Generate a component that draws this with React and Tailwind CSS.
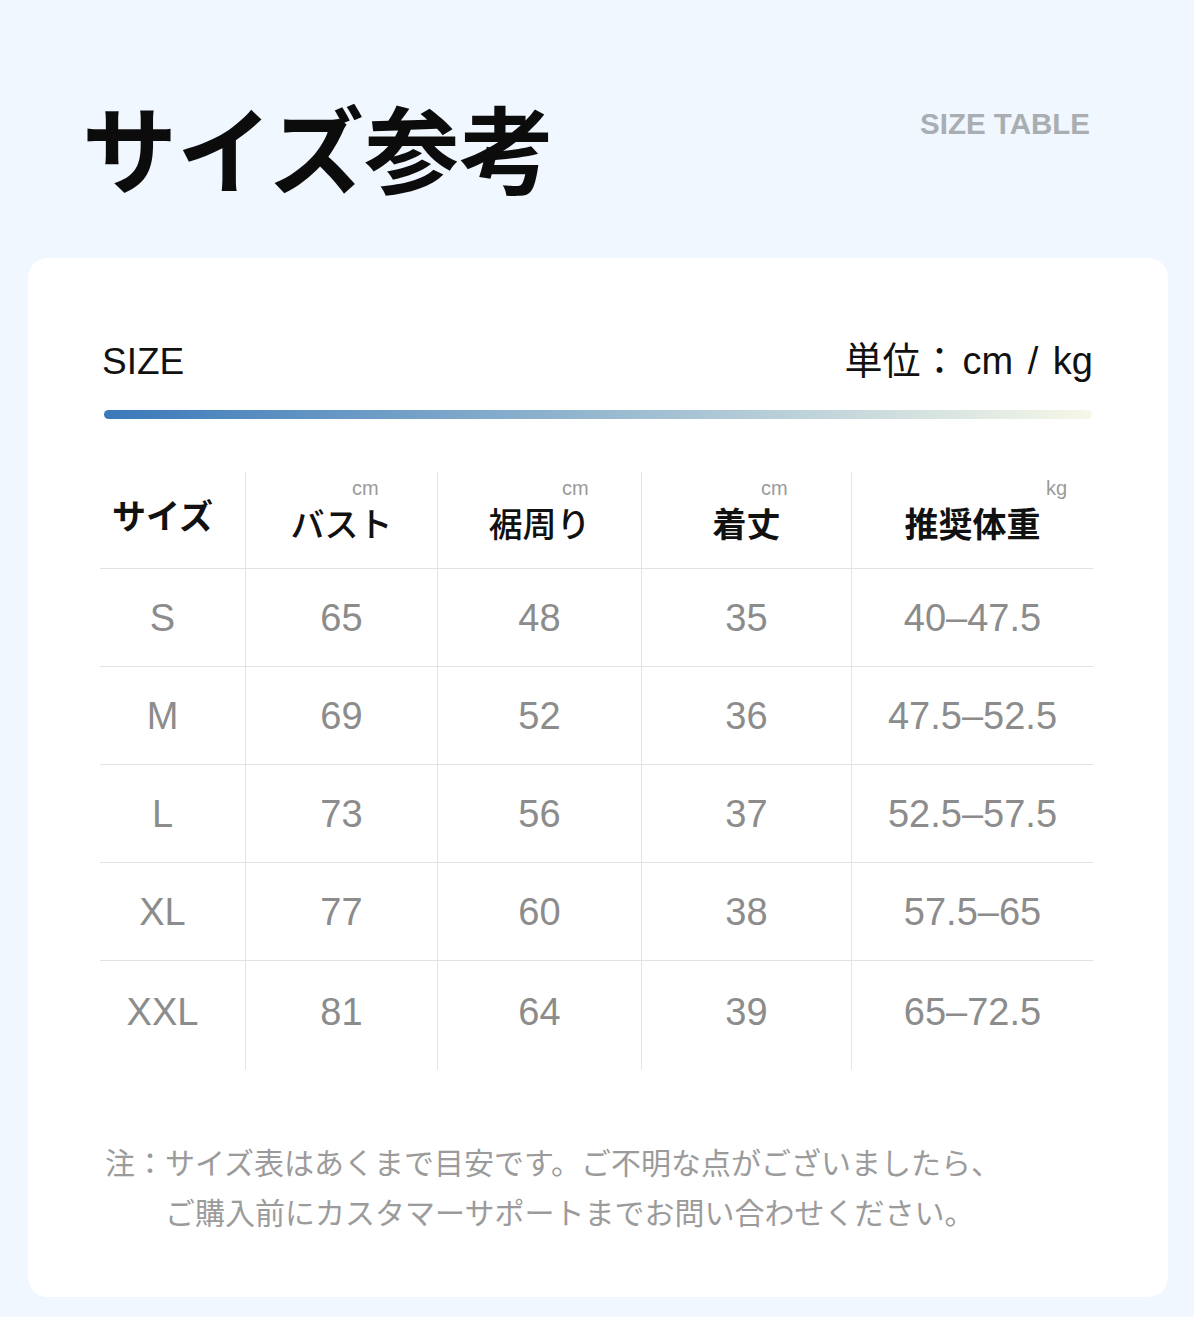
import React from "react";

const cjk = "font-['Noto_Sans_CJK_JP',sans-serif]";
const latin = "font-['Liberation_Sans','Noto_Sans_CJK_JP',sans-serif]";

const columns = [
  { label: "サイズ", width: "w-[146px]", unit: null, weight: "font-bold", first: true },
  { label: "バスト", width: "w-[192px]", unit: "cm", unitPos: "left-[106px]", weight: "font-medium" },
  { label: "裾周り", width: "w-[204px]", unit: "cm", unitPos: "left-[124px]", weight: "font-medium" },
  { label: "着丈", width: "w-[210px]", unit: "cm", unitPos: "left-[119px]", weight: "font-bold" },
  { label: "推奨体重", width: "flex-1", unit: "kg", unitPos: "left-[194px]", weight: "font-bold" },
];

const rows = [
  ["S", "65", "48", "35", "40–47.5"],
  ["M", "69", "52", "36", "47.5–52.5"],
  ["L", "73", "56", "37", "52.5–57.5"],
  ["XL", "77", "60", "38", "57.5–65"],
  ["XXL", "81", "64", "39", "65–72.5"],
];

const HeaderCell = ({ col, last }) => (
  <div
    className={`relative ${col.width} flex items-center justify-center ${
      col.first ? "pr-[20px] pb-[10px]" : "pt-[6px]"
    } ${last ? "" : "border-r border-[#e4e4e4]"}`}
  >
    {col.unit && (
      <span
        className={`absolute top-[6px] ${col.unitPos} text-[20px] leading-none text-[#9a9a9a] ${latin}`}
      >
        {col.unit}
      </span>
    )}
    <span className={`text-[34px] leading-none text-[#111] ${col.weight} ${cjk}`}>
      {col.label}
    </span>
  </div>
);

const App = () => {
  return (
    <div className="min-h-[1317px] bg-[#f0f7fe] pb-[21px]">
      <div className="flex items-start justify-between pl-[82px] pr-[104px] pt-[98px]">
        <h1 className={`text-[95px] leading-none font-bold text-[#0c0c0c] ${cjk}`}>
          サイズ参考
        </h1>
        <span
          className={`mt-[11px] text-[29.5px] leading-[30px] font-bold text-[#a9aeb3] ${latin}`}
        >
          SIZE TABLE
        </span>
      </div>

      <div className="mt-[65px] ml-[28px] mr-[26px] rounded-[20px] bg-white pl-[72px] pr-[75px] pt-[81px] pb-[61px]">
        <div className="flex h-[37px] items-baseline justify-between pl-[2px]">
          <span className={`text-[37px] leading-[37px] text-[#111] ${latin}`}>SIZE</span>
          <span className="flex h-[37px] items-baseline text-[#111]">
            <span className={`text-[38px] leading-[37px] ${cjk}`}>単位：</span>
            <span className={`ml-[4px] text-[38px] leading-[37px] [word-spacing:4px] ${latin}`}>cm / kg</span>
          </span>
        </div>

        <div className="mt-[34px] ml-[4px] mr-[1px] h-[9px] rounded-full bg-linear-to-r from-[#3a79ba] via-[#96b8cf] to-[#f6f8e8]" />

        <div className="mt-[53px]">
          <div className="flex h-[97px] border-b border-[#e2e2e2]">
            {columns.map((col, i) => (
              <HeaderCell key={col.label} col={col} last={i === columns.length - 1} />
            ))}
          </div>
          {rows.map((row, r) => {
            const isLast = r === rows.length - 1;
            return (
              <div
                key={row[0]}
                className={`flex ${isLast ? "h-[109px]" : "h-[98px] border-b border-[#e2e2e2]"}`}
              >
                {row.map((cell, i) => (
                  <div
                    key={i}
                    className={`${columns[i].width} flex items-center justify-center ${
                      i === 0 ? "pr-[20px]" : ""
                    } ${isLast ? "pb-[8px]" : ""} ${
                      i === row.length - 1 ? "" : "border-r border-[#e4e4e4]"
                    }`}
                  >
                    <span className={`text-[38px] leading-none text-[#8c8c8c] ${latin}`}>
                      {cell}
                    </span>
                  </div>
                ))}
              </div>
            );
          })}
        </div>

        <div className={`mt-[66px] text-[30px] leading-[50px] text-[#9b9b9b] ${cjk}`}>
          <p className="pl-[5px]">注：サイズ表はあくまで目安です。ご不明な点がございましたら、</p>
          <p className="pl-[65px]">ご購入前にカスタマーサポートまでお問い合わせください。</p>
        </div>
      </div>
    </div>
  );
};

export default App;
